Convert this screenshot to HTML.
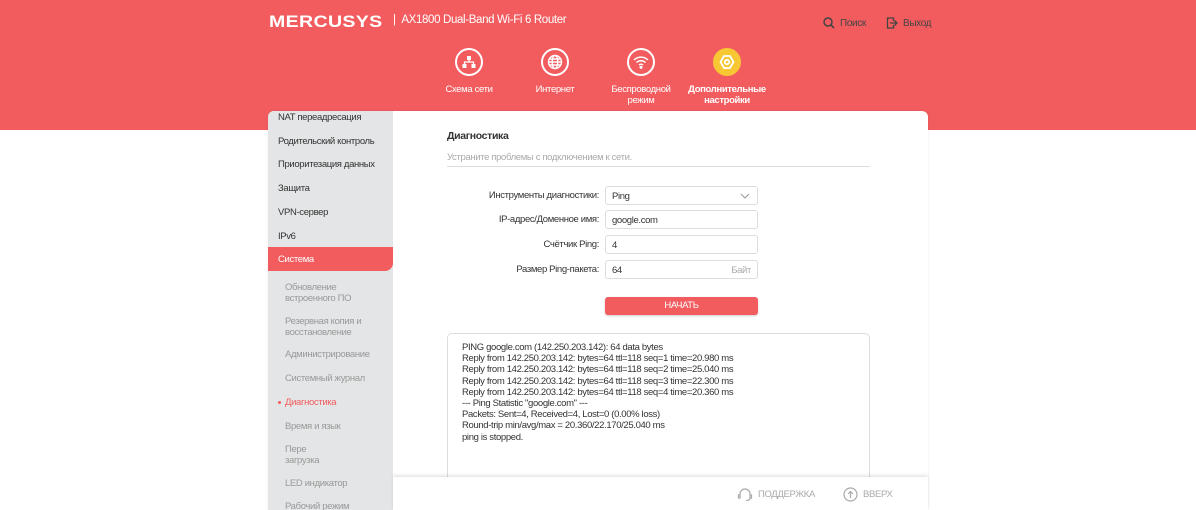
<!DOCTYPE html>
<html><head><meta charset="utf-8"><style>
*{margin:0;padding:0;box-sizing:border-box}
body{width:1196px;height:510px;overflow:hidden;background:#fff;font-family:"Liberation Sans",sans-serif;position:relative;color:#333;letter-spacing:-0.35px}
.hdr{position:absolute;left:0;top:0;width:1196px;height:130px;background:#f25c5f}
.logo{position:absolute;left:269px;top:12px;color:#fff;font-weight:900;font-size:17px;letter-spacing:0.3px;transform:scaleX(1.15);transform-origin:left}
.model{position:absolute;left:393px;top:14px;color:#fff;font-size:11.5px}
.tl{position:absolute;top:17px;color:#444;font-size:10px;display:flex;align-items:center;gap:5px}
.nav{position:absolute;top:48px;width:100px;text-align:center;color:#fff;font-size:9.5px;line-height:11px}
.nav .c{width:28px;height:28px;border:2px solid #fff;border-radius:50%;margin:0 auto 8px;display:flex;align-items:center;justify-content:center}
.nav.act .c{background:#f7c833;border-color:#f7c833}
.tri{position:absolute;left:721px;top:124px;width:0;height:0;border-left:7px solid transparent;border-right:7px solid transparent;border-bottom:7px solid #fff}
.card{position:absolute;left:268px;top:111px;width:660px;height:399px;background:#fff;border-radius:6px 6px 0 0;overflow:hidden;box-shadow:0 0 3px rgba(0,0,0,.08)}
.side{position:absolute;left:0;top:0;width:125px;height:399px;background:#e4e5e6}
.si{position:absolute;left:10px;font-size:9.5px;color:#333}
.sub{position:absolute;left:17px;font-size:9.5px;color:#999;line-height:10.5px}
.sel{position:absolute;left:0;top:136px;width:125px;height:24px;background:#f25c5f;border-radius:0 0 8px 0;color:#fff;font-size:9.5px;padding:7px 10px}
.lbl{position:absolute;font-size:9.5px;color:#333;text-align:right}
.inp{position:absolute;left:605px;width:153px;height:19px;border:1px solid #ddd;border-radius:3px;font-size:9.5px;padding:4px 6px;color:#333}
.out{position:absolute;left:447px;top:333px;width:423px;height:160px;border:1px solid #ddd;border-radius:5px;font-size:9.5px;line-height:11.2px;padding:8px 14px;color:#333}
.foot{position:absolute;left:393px;top:477px;width:535px;height:33px;background:#fff;box-shadow:0 -2px 3px rgba(0,0,0,.1)}
.fi{position:absolute;top:487px;font-size:9.5px;color:#aaa;display:flex;align-items:center;gap:5px}
</style></head><body>
<div class="hdr">
<div class="logo">MERCUSYS</div>
<div class="model">|&nbsp;&nbsp;AX1800 Dual-Band Wi-Fi 6 Router</div>
<div class="tl" style="left:823px"><svg width="12" height="12" viewBox="0 0 12 12"><circle cx="5" cy="5" r="4" fill="none" stroke="#444" stroke-width="1.5"/><path d="M8 8l3 3" stroke="#444" stroke-width="1.6"/></svg>Поиск</div>
<div class="tl" style="left:886px"><svg width="12" height="12" viewBox="0 0 12 12"><path d="M5 1H1.5v10H5M1.5 1h6v3M1.5 11h6V8M4 6h7M8.5 3.5L11 6 8.5 8.5" fill="none" stroke="#444" stroke-width="1.3"/></svg>Выход</div>
<div class="nav" style="left:419px"><div class="c"><svg width="14" height="14" viewBox="0 0 14 14" fill="#fff"><rect x="5" y="1" width="4" height="4"/><rect x="0.5" y="9" width="4" height="4"/><rect x="9.5" y="9" width="4" height="4"/><path d="M7 5v2M2.5 9V7h9v2" stroke="#fff" fill="none" stroke-width="1.3"/></svg></div>Схема сети</div>
<div class="nav" style="left:505px"><div class="c"><svg width="16" height="16" viewBox="0 0 16 16" fill="none" stroke="#fff" stroke-width="1.4"><circle cx="8" cy="8" r="6.5"/><ellipse cx="8" cy="8" rx="2.8" ry="6.5"/><path d="M1.5 8h13M2.5 5h11M2.5 11h11"/></svg></div>Интернет</div>
<div class="nav" style="left:591px"><div class="c"><svg width="16" height="14" viewBox="0 0 16 14" fill="none" stroke="#fff" stroke-width="1.5"><path d="M1 5a10 10 0 0 1 14 0M3.5 7.5a6.5 6.5 0 0 1 9 0M6 10a3 3 0 0 1 4 0"/><circle cx="8" cy="12.3" r="0.8" fill="#fff"/></svg></div>Беспроводной<br>режим</div>
<div class="nav act" style="left:677px;font-weight:bold"><div class="c"><svg width="16" height="16" viewBox="0 0 16 16"><path d="M5 2h6l3.5 6-3.5 6H5L1.5 8z" fill="none" stroke="#fff" stroke-width="1.8"/><circle cx="8" cy="8" r="2.2" fill="none" stroke="#fff" stroke-width="1.8"/></svg></div>Дополнительные<br>настройки</div>
<div class="tri"></div>
</div>
<div class="card">
<div class="side">
<div class="si" style="top:1px">NAT переадресация</div>
<div class="si" style="top:25px">Родительский контроль</div>
<div class="si" style="top:48px">Приоритезация данных</div>
<div class="si" style="top:72px">Защита</div>
<div class="si" style="top:96px">VPN-сервер</div>
<div class="si" style="top:120px">IPv6</div>
<div class="sel">Система</div>
<div class="sub" style="top:172px">Обновление<br>встроенного ПО</div>
<div class="sub" style="top:206px">Резервная копия и<br>восстановление</div>
<div class="sub" style="top:239px">Администрирование</div>
<div class="sub" style="top:263px">Системный журнал</div>
<div class="sub" style="top:287px;color:#f25c5f"><span style="position:absolute;left:-7px;top:3px;width:3px;height:3px;border-radius:50%;background:#f25c5f"></span>Диагностика</div>
<div class="sub" style="top:311px">Время и язык</div>
<div class="sub" style="top:334px">Пере<br>загрузка</div>
<div class="sub" style="top:368px">LED индикатор</div>
<div class="sub" style="top:391px">Рабочий режим</div>
</div>
</div>
<div style="position:absolute;left:447px;top:130px;font-size:10.5px;font-weight:bold;color:#333">Диагностика</div>
<div style="position:absolute;left:447px;top:152px;font-size:9.5px;color:#aaa">Устраните проблемы с подключением к сети.</div>
<div style="position:absolute;left:447px;top:166px;width:423px;height:1px;background:#ddd"></div>
<div class="lbl" style="top:190px;right:597px">Инструменты диагностики:</div>
<div class="lbl" style="top:214px;right:597px">IP-адрес/Доменное имя:</div>
<div class="lbl" style="top:239px;right:597px">Счётчик Ping:</div>
<div class="lbl" style="top:264px;right:597px">Размер Ping-пакета:</div>
<div class="inp" style="top:186px">Ping<svg style="position:absolute;right:7px;top:6px" width="10" height="6" viewBox="0 0 10 6"><path d="M1 1l4 4 4-4" fill="none" stroke="#999" stroke-width="1"/></svg></div>
<div class="inp" style="top:210px">google.com</div>
<div class="inp" style="top:235px">4</div>
<div class="inp" style="top:260px">64<span style="position:absolute;right:6px;color:#aaa">Байт</span></div>
<div style="position:absolute;left:605px;top:297px;width:153px;height:18px;background:#f25c5f;border-radius:3px;color:#fff;font-size:9.5px;text-align:center;line-height:18px;box-shadow:0 1px 2px rgba(0,0,0,.2)">НАЧАТЬ</div>
<div class="out">PING google.com (142.250.203.142): 64 data bytes<br>Reply from 142.250.203.142: bytes=64 ttl=118 seq=1 time=20.980 ms<br>Reply from 142.250.203.142: bytes=64 ttl=118 seq=2 time=25.040 ms<br>Reply from 142.250.203.142: bytes=64 ttl=118 seq=3 time=22.300 ms<br>Reply from 142.250.203.142: bytes=64 ttl=118 seq=4 time=20.360 ms<br>--- Ping Statistic "google.com" ---<br>Packets: Sent=4, Received=4, Lost=0 (0.00% loss)<br>Round-trip min/avg/max = 20.360/22.170/25.040 ms<br>ping is stopped.</div>
<div class="foot"></div>
<div class="fi" style="left:737px"><svg width="16" height="14" viewBox="0 0 16 14" fill="none" stroke="#aaa" stroke-width="1.2"><path d="M3 9V7a5 5 0 0 1 10 0v2M3 8h-1.5v3H3zM13 8h1.5v3H13zM13 11c0 2-2 2.5-4 2.5"/></svg>ПОДДЕРЖКА</div>
<div class="fi" style="left:843px"><svg width="15" height="15" viewBox="0 0 15 15" fill="none" stroke="#aaa" stroke-width="1.2"><circle cx="7.5" cy="7.5" r="6.5"/><path d="M7.5 11V4.5M5 7l2.5-2.5L10 7"/></svg>ВВЕРХ</div>
</body></html>
